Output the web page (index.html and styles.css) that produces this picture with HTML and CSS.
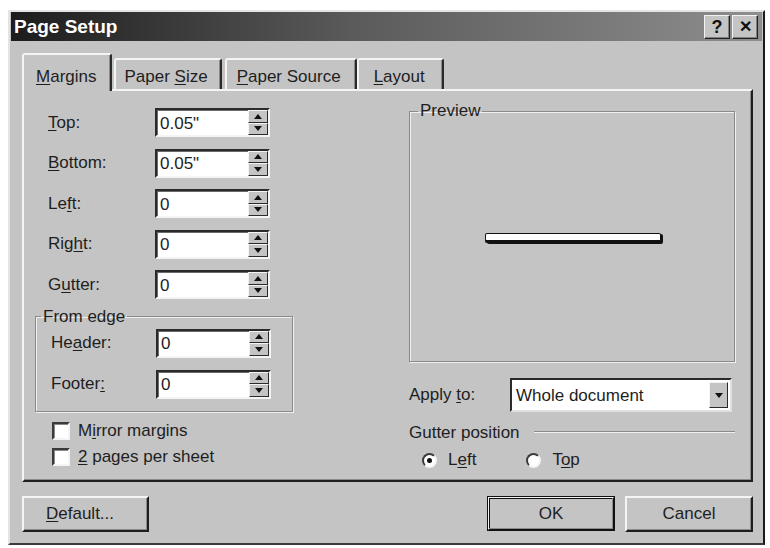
FILE: index.html
```html
<!DOCTYPE html>
<html lang="en">
<head>
  <meta charset="UTF-8" />
  <title>Page Setup</title>
  <link rel="stylesheet" href="styles.css">
</head>
<body>

  <div class="dialog">
    <div class="titlebar">
      <span class="title">Page Setup</span>
      <span class="title-btns">
        <span class="tbtn">?</span>
        <span class="tbtn tbtn-x">&#x2715;</span>
      </span>
    </div>

    <div class="tabs">
      <div class="tab active"><u>M</u>argins</div>
      <div class="tab">Paper <u>S</u>ize</div>
      <div class="tab"><u>P</u>aper Source</div>
      <div class="tab"><u>L</u>ayout</div>
    </div>

    <div class="panel">
      <div class="col-left">
        <div class="row"><label><u>T</u>op:</label><div class="spin"><input value="0.05&quot;"><span class="spin-btns"><i class="up"></i><i class="down"></i></span></div></div>
        <div class="row"><label><u>B</u>ottom:</label><div class="spin"><input value="0.05&quot;"><span class="spin-btns"><i class="up"></i><i class="down"></i></span></div></div>
        <div class="row"><label>Le<u>f</u>t:</label><div class="spin"><input value="0"><span class="spin-btns"><i class="up"></i><i class="down"></i></span></div></div>
        <div class="row"><label>Rig<u>h</u>t:</label><div class="spin"><input value="0"><span class="spin-btns"><i class="up"></i><i class="down"></i></span></div></div>
        <div class="row"><label>G<u>u</u>tter:</label><div class="spin"><input value="0"><span class="spin-btns"><i class="up"></i><i class="down"></i></span></div></div>

        <fieldset class="group edge">
          <legend>From edge</legend>
          <div class="row"><label>He<u>a</u>der:</label><div class="spin"><input value="0"><span class="spin-btns"><i class="up"></i><i class="down"></i></span></div></div>
          <div class="row"><label>Footer<u>:</u></label><div class="spin"><input value="0"><span class="spin-btns"><i class="up"></i><i class="down"></i></span></div></div>
        </fieldset>

        <div class="checks">
          <div class="check"><span class="box"></span><span>M<u>i</u>rror margins</span></div>
          <div class="check"><span class="box"></span><span><u>2</u> pages per sheet</span></div>
        </div>
      </div>

      <div class="col-right">
        <fieldset class="group preview">
          <legend>Preview</legend>
          <div class="page-line"></div>
        </fieldset>

        <div class="apply">
          <label>Apply <u>t</u>o:</label>
          <div class="select">
            <span class="select-val">Whole document</span>
            <span class="select-btn down"></span>
          </div>
        </div>

        <div class="gutter-head"><span>Gutter position</span><span class="rule"></span></div>
        <div class="radios">
          <div class="radio"><span class="dot on"></span><span>L<u>e</u>ft</span></div>
          <div class="radio"><span class="dot"></span><span>T<u>o</u>p</span></div>
        </div>
      </div>
    </div>

    <div class="footer">
      <button class="btn btn-left"><u>D</u>efault...</button>
      <div class="footer-right">
        <button class="btn btn-default">OK</button>
        <button class="btn">Cancel</button>
      </div>
    </div>
  </div>

</body>
</html>
```

FILE: styles.css
```css
* {
  box-sizing: border-box;
}
body {
  margin: 0;
  background: #fff;
  font-family: "Liberation Sans", Arial, sans-serif;
  font-size: 17px;
  color: #1e1e1e;
}
u {
  text-decoration-thickness: 1px;
  text-underline-offset: 2px;
}
.dialog {
  margin: 10px 0 0 8px;
  width: 757px;
  height: 535px;
  background: #c4c4c4;
  border: 2px solid;
  border-color: #e4e4e4 #1a1a1a #3a3a3a #e4e4e4;
}
.titlebar {
  height: 29px;
  margin: 0 1px;
  background: linear-gradient(to right, #1c1c1c, #5a5a5a 45%, #8e8e8e);
  display: flex;
  align-items: center;
  justify-content: space-between;
  padding: 0 4px 0 3px;
}
.title {
  color: #fff;
  font-weight: bold;
  font-size: 19px;
}
.title-btns {
  display: flex;
  gap: 2px;
}
.tbtn {
  width: 26px;
  height: 24px;
  background: #c4c4c4;
  border: 1px solid;
  border-color: #f2f2f2 #222 #222 #f2f2f2;
  box-shadow: inset -1px -1px #808080;
  font-weight: bold;
  font-size: 18px;
  line-height: 22px;
  text-align: center;
  color: #111;
}
.tbtn-x {
  font-size: 16px;
}

.tabs {
  display: flex;
  align-items: flex-end;
  margin: 12px 0 0 12px;
  height: 36px;
  position: relative;
  z-index: 1;
}
.tab {
  height: 31px;
  line-height: 34px;
  border: 2px solid;
  border-bottom: none;
  border-color: #f4f4f4 #2a2a2a #2a2a2a #f4f4f4;
  border-radius: 3px 3px 0 0;
  box-shadow: inset -1px 0 #8a8a8a;
}
.tab.active {
  height: 38px;
  line-height: 44px;
  padding: 0 14px 0 12px;
  margin: 0 2px -2px 0;
  background: #c4c4c4;
}
.tab:nth-child(2) { padding: 0 12px 0 8px; margin-right: 3px; }
.tab:nth-child(3) { padding: 0 14px 0 10px; }
.tab:nth-child(4) { padding: 0 17px 0 15px; }

.panel {
  margin-left: 12px;
  width: 731px;
  height: 393px;
  border: 2px solid;
  border-color: #f4f4f4 #1e1e1e #1e1e1e #f4f4f4;
  box-shadow: inset -1px -1px #8a8a8a;
  display: flex;
  justify-content: space-between;
  padding: 0 16px 0 11px;
}

.col-left {
  width: 258px;
  padding-top: 17px;
  display: flex;
  flex-direction: column;
  gap: 11.5px;
}
.row {
  display: flex;
  align-items: center;
  height: 29px;
}
.row label {
  width: 120px;
  padding-left: 13px;
}

.spin {
  width: 115px;
  height: 29px;
  display: flex;
  background: #fff;
  border: 2px solid;
  border-color: #2a2a2a #f4f4f4 #f4f4f4 #2a2a2a;
  box-shadow: inset 1px 1px #6a6a6a;
}
.spin input {
  flex: 1;
  min-width: 0;
  border: none;
  outline: none;
  background: transparent;
  font: inherit;
  color: #1e1e1e;
  padding: 2px 0 0 3px;
}
.spin-btns {
  width: 20px;
  display: flex;
  flex-direction: column;
}
.spin-btns i,
.select-btn {
  flex: 1;
  display: flex;
  align-items: center;
  justify-content: center;
  background: #c4c4c4;
  border: 1px solid;
  border-color: #f4f4f4 #2a2a2a #2a2a2a #f4f4f4;
}
.up::before,
.down::before {
  content: "";
  border-left: 4px solid transparent;
  border-right: 4px solid transparent;
}
.up::before {
  border-bottom: 5px solid #111;
}
.down::before {
  border-top: 5px solid #111;
}

.group {
  margin: 0;
  border: 1px solid #8a8a8a;
  box-shadow: 1px 1px 0 #f0f0f0, inset 1px 1px 0 #f0f0f0;
}
.group legend {
  padding: 0 2px;
  line-height: 20px;
}
.edge {
  margin-top: -4px;
  padding: 2px 0 12px 1px;
  display: flex;
  flex-direction: column;
  gap: 12px;
}
.edge legend {
  margin-left: 4px;
}
.edge .row label {
  padding-left: 14px;
  width: 119px;
}

.checks {
  display: flex;
  flex-direction: column;
  gap: 8px;
  padding-left: 17px;
  margin-top: -1px;
}
.check {
  display: flex;
  align-items: center;
  gap: 8px;
  height: 18px;
}
.box {
  width: 18px;
  height: 18px;
  background: #fff;
  border: 2px solid;
  border-color: #3a3a3a #f4f4f4 #f4f4f4 #3a3a3a;
  box-shadow: inset 1px 1px #8a8a8a;
}

.col-right {
  width: 326px;
  padding-top: 10px;
}
.preview {
  height: 261px;
  padding: 0;
  display: flex;
  align-items: center;
  justify-content: center;
}
.preview legend {
  margin-left: 8px;
}
.page-line {
  width: 176px;
  height: 10px;
  background: #fff;
  border: 1px solid #111;
  border-bottom-width: 3px;
  border-radius: 2px;
  box-shadow: 2px 1px 0 #111;
  margin: 0 0 6px 2px;
}

.apply {
  display: flex;
  align-items: center;
  margin-top: 16px;
  height: 34px;
}
.apply label {
  width: 101px;
}
.select {
  width: 222px;
  height: 34px;
  display: flex;
  background: #fff;
  border: 2px solid;
  border-color: #2a2a2a #e0e0e0 #e0e0e0 #2a2a2a;
  padding: 2px;
}
.select-val {
  flex: 1;
  padding: 4px 0 0 2px;
}
.select-btn {
  flex: 0 0 19px;
}

.gutter-head {
  display: flex;
  align-items: center;
  gap: 14px;
  height: 20px;
  margin-top: 11px;
}
.rule {
  flex: 1;
  border-top: 1px solid #8a8a8a;
  border-bottom: 1px solid #f0f0f0;
  margin-top: -2px;
}
.radios {
  display: flex;
  gap: 50px;
  padding-left: 13px;
  margin-top: 7px;
}
.radio {
  display: flex;
  align-items: center;
  gap: 11px;
  height: 20px;
}
.dot {
  width: 15px;
  height: 15px;
  border-radius: 50%;
  background: #fff;
  border: 2px solid;
  border-color: #3a3a3a #f4f4f4 #f4f4f4 #3a3a3a;
  display: flex;
  align-items: center;
  justify-content: center;
}
.dot.on::before {
  content: "";
  width: 5px;
  height: 5px;
  border-radius: 50%;
  background: #111;
}

.footer {
  display: flex;
  justify-content: space-between;
  margin: 14px 0 0 12px;
  width: 731px;
}
.footer-right {
  display: flex;
  gap: 10px;
}
.btn {
  width: 128px;
  height: 36px;
  font: inherit;
  color: #1e1e1e;
  background: #c4c4c4;
  border: 2px solid;
  border-color: #f4f4f4 #1e1e1e #1e1e1e #f4f4f4;
  box-shadow: inset -1px -1px #8a8a8a;
  padding: 0;
}
.btn-left {
  width: 127px;
  text-align: left;
  padding-left: 22px;
}
.btn-default {
  height: 35px;
  outline: 1px solid #111;
  outline-offset: -1px;
  border-color: #f4f4f4 #111 #111 #f4f4f4;
  box-shadow: inset -1px -1px #8a8a8a, inset 1px 1px #111;
}
```
